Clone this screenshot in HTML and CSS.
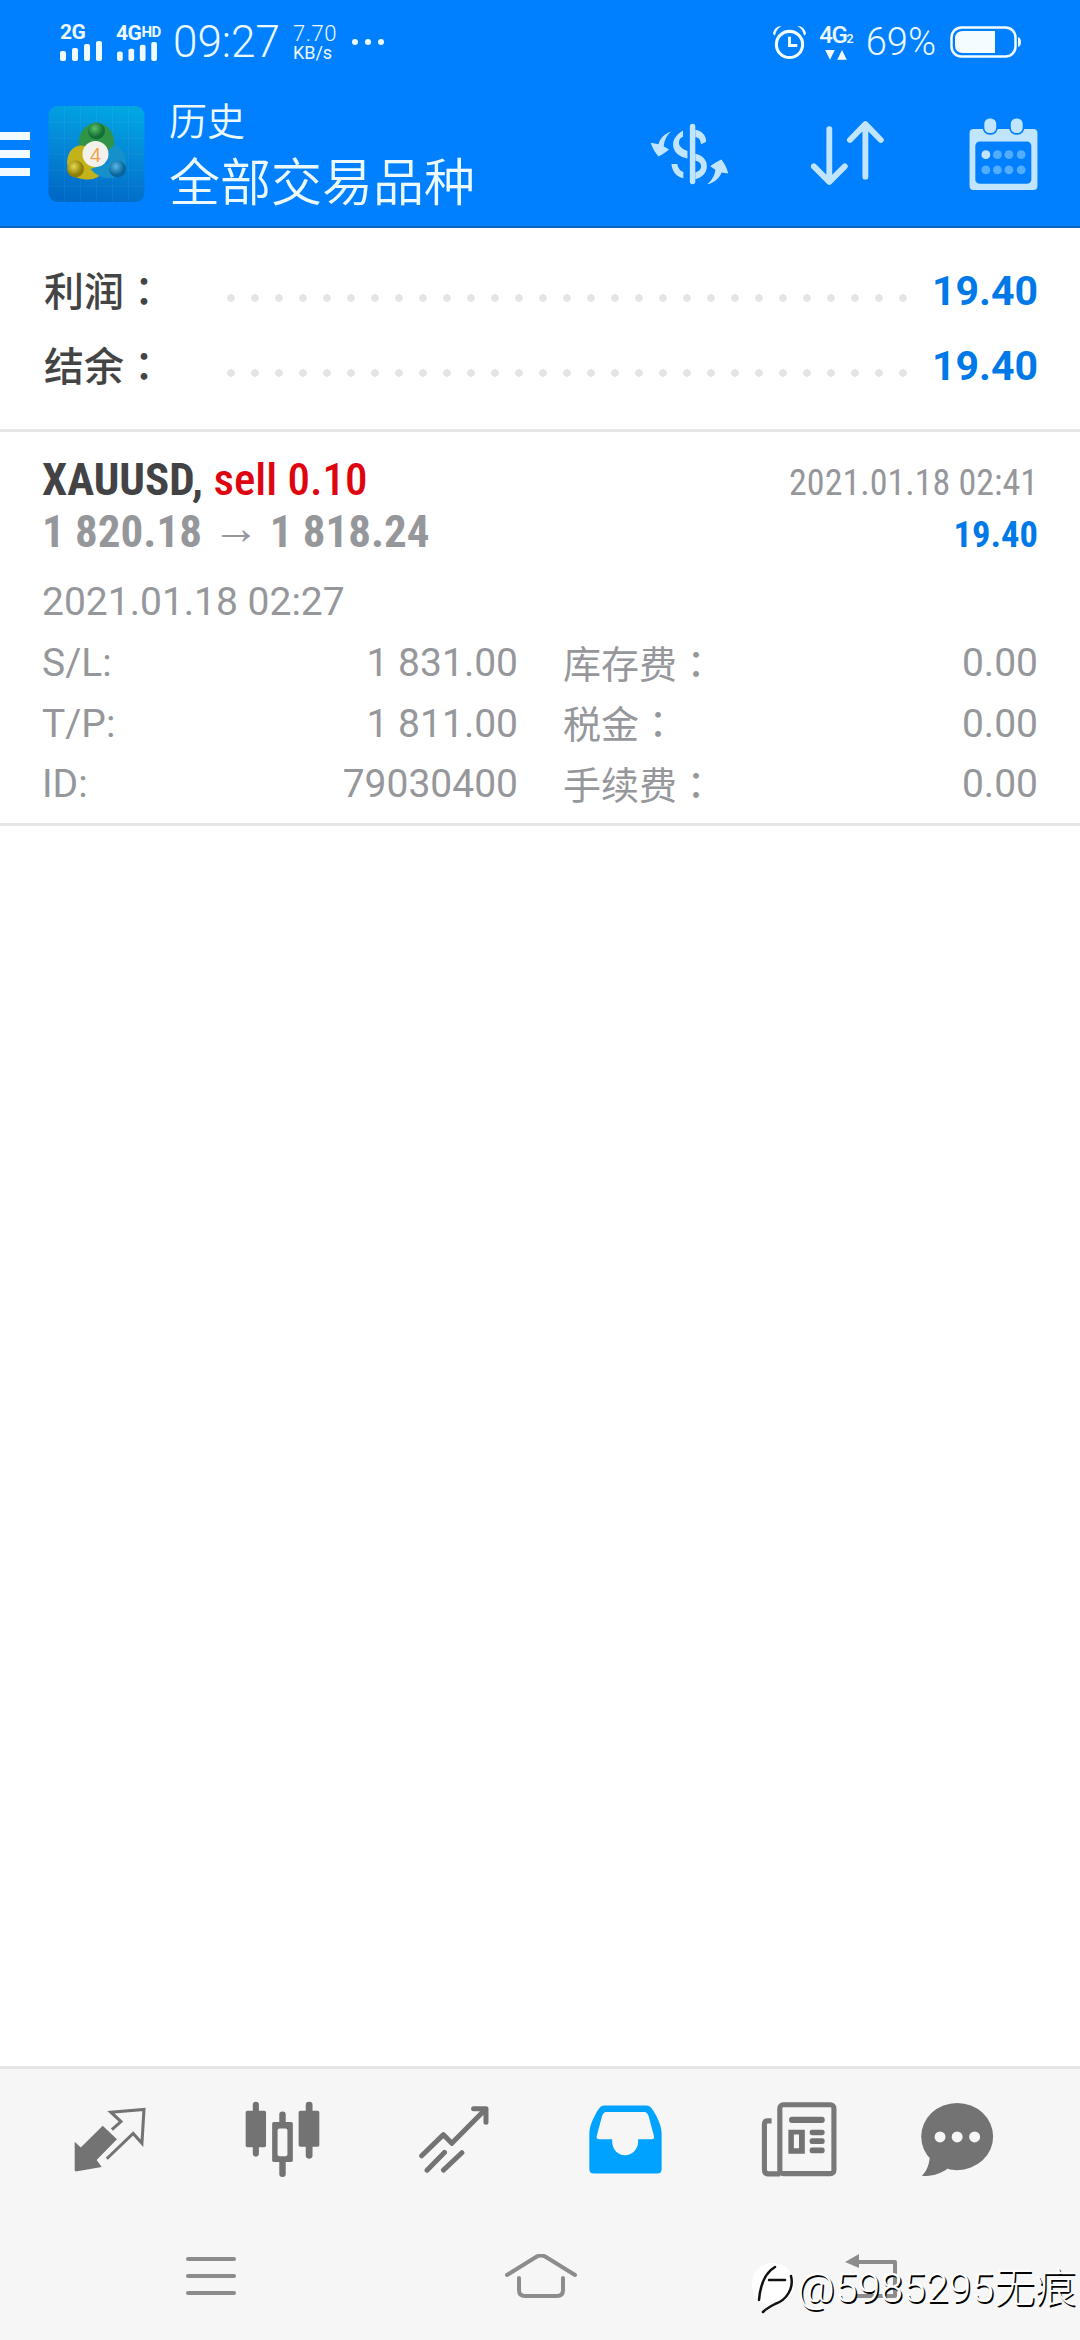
FILE: index.html
```html
<!DOCTYPE html>
<html lang="zh-CN">
<head>
<meta charset="utf-8">
<title>历史</title>
<link rel="stylesheet" href="styles.css">
</head>
<body>
<div class="app">
  <header class="top">
    <div class="status">
      <div class="sig">
        <span class="sig-label">2G</span>
        <svg class="sig-bars" viewBox="0 0 42 20"><rect x="0" y="10" width="6" height="10" rx="2"/><rect x="12" y="7" width="6" height="13" rx="2"/><rect x="24" y="3" width="6" height="17" rx="2"/><rect x="36" y="0" width="6" height="20" rx="2"/></svg>
      </div>
      <div class="sig sig-2">
        <span class="sig-label">4G<span class="sig-hd">HD</span></span>
        <svg class="sig-bars" viewBox="0 0 42 20"><rect x="0" y="10" width="6" height="10" rx="2"/><rect x="12" y="7" width="6" height="13" rx="2"/><rect x="24" y="3" width="6" height="17" rx="2"/><rect x="36" y="0" width="6" height="20" rx="2"/></svg>
      </div>
      <span class="time">09:27</span>
      <div class="speed"><span class="speed-n">7.70</span><span class="speed-u">KB/s</span></div>
      <div class="more"><i></i><i></i><i></i></div>
      <div class="status-right">
        <svg class="alarm" viewBox="0 0 36 36"><circle cx="18" cy="20" r="13.5" class="ln" stroke-width="3.2"/><path d="M18 12V21H26" class="ln" stroke-width="3"/><path d="M1 9C2 4 5 1 10 1 6 3 4 6 3 11Z M35 9C34 4 31 1 26 1 30 3 32 6 33 11Z" class="fl"/></svg>
        <div class="net">
          <span class="net-t">4G<span class="net-s">2</span></span>
          <svg class="net-a" viewBox="0 0 20 9"><path d="M1 0H9L5 8Z M11 8H19L15 0Z" class="fl"/></svg>
        </div>
        <span class="pct">69%</span>
        <svg class="batt" viewBox="0 0 72 32"><rect x="1.5" y="1.5" width="64" height="29" rx="10" class="ln" stroke-width="2.5"/><path d="M13 5H45V27H13Q5 27 5 19V13Q5 5 13 5Z" class="fl"/><path d="M68 11Q71 12 71 16 71 20 68 21Z" class="fl"/></svg>
      </div>
    </div>
    <div class="bar">
      <div class="burger"><i></i><i></i><i></i></div>
      <svg class="logo" viewBox="0 0 96 96">
        <defs>
          <linearGradient id="lg" x1="0.6" y1="0" x2="0.4" y2="1"><stop offset="0" stop-color="#00a6e2"/><stop offset="0.5" stop-color="#0586d6"/><stop offset="1" stop-color="#0068c6"/></linearGradient>
          <radialGradient id="gb" cx="0.4" cy="0.35"><stop offset="0" stop-color="#5cc268"/><stop offset="1" stop-color="#126f36"/></radialGradient>
          <radialGradient id="yb" cx="0.4" cy="0.35"><stop offset="0" stop-color="#e6da4c"/><stop offset="1" stop-color="#8f7d08"/></radialGradient>
          <radialGradient id="bb" cx="0.4" cy="0.35"><stop offset="0" stop-color="#58b8e4"/><stop offset="1" stop-color="#07659c"/></radialGradient>
        </defs>
        <rect width="96" height="96" rx="9" fill="url(#lg)"/>
        <path d="M0 16H96M0 32H96M0 48H96M0 64H96M0 80H96M16 0V96M32 0V96M48 0V96M64 0V96M80 0V96" class="logo-grid"/>
        <path d="M31 42C28 28 37 17 48 17 59 17 68 28 65 42L48 50Z" fill="#2f9447"/>
        <path d="M50 50C42 38 28 36 22 45 15 56 19 71 34 73 44 75 52 71 56 65Z" fill="#c4b21a"/>
        <path d="M42 63C50 73 66 76 74 67 81 58 78 44 66 39L57 47 60 57Z" fill="#1690cb"/>
        <circle cx="48" cy="25" r="8.5" fill="url(#gb)"/>
        <circle cx="27" cy="63" r="8.5" fill="url(#yb)"/>
        <circle cx="69" cy="63" r="8.5" fill="url(#bb)"/>
        <circle cx="47" cy="48" r="13" fill="#f3f1ec"/>
        <text x="47" y="56" class="logo-4">4</text>
      </svg>
      <div class="titles">
        <div class="t1">历史</div>
        <div class="t2">全部交易品种</div>
      </div>
      <div class="actions">
        <svg class="act act-1" viewBox="320 370 232 182">
          <rect x="437" y="372" width="16" height="178" rx="8" class="ac"/>
          <path class="ac" d="M453 390C470 392 485 405 485 425L470 432C468 418 462 412 453 412Z M417 392C395 405 380 425 392 450 398 462 410 470 430 474V452C418 448 405 440 405 428 405 418 410 412 417 410Z M453 460C475 465 487 478 487 497 487 518 472 530 453 535V515C465 512 470 505 470 497 470 488 465 483 453 480Z M383 490H400C402 502 408 510 418 514V532C398 528 385 512 383 490Z M382 395C362 402 350 415 345 432L322 428C328 445 335 458 345 468 358 462 368 455 376 448L360 438C362 420 370 405 382 395Z M488 550C510 545 525 530 530 515L550 518C545 500 538 488 530 477 518 482 505 490 497 497L512 507C510 525 500 540 488 550Z"/>
        </svg>
        <svg class="act act-2" viewBox="780 370 215 195">
          <path class="ac-ln" d="M836 397V550M791 505L836 550 881 505M941 535V382M896 428L941 382 986 428"/>
        </svg>
        <svg class="act act-3" viewBox="1240 355 206 218">
          <rect x="1243" y="390" width="200" height="180" rx="12" class="ac"/>
          <rect x="1260" y="427" width="165" height="125" rx="13" class="ac-bg"/>
          <rect x="1284" y="357" width="40" height="48" rx="18" class="ac ac-hook"/>
          <rect x="1362" y="357" width="40" height="48" rx="18" class="ac ac-hook"/>
          <circle cx="1291" cy="466" r="13" class="ac"/>
          <circle cx="1325" cy="466" r="13" class="ac-d"/><circle cx="1359" cy="466" r="13" class="ac-d"/><circle cx="1395" cy="466" r="13" class="ac-d"/>
          <circle cx="1291" cy="511" r="13" class="ac-d"/><circle cx="1325" cy="511" r="13" class="ac-d"/><circle cx="1359" cy="511" r="13" class="ac-d"/><circle cx="1395" cy="511" r="13" class="ac-d"/>
        </svg>
      </div>
    </div>
  </header>

  <section class="summary">
    <div class="sum-row">
      <span class="sum-label">利润<span class="colon" lang="zh-TW">：</span></span>
      <span class="dots"></span>
      <span class="sum-val">19.40</span>
    </div>
    <div class="sum-row">
      <span class="sum-label">结余<span class="colon" lang="zh-TW">：</span></span>
      <span class="dots"></span>
      <span class="sum-val">19.40</span>
    </div>
  </section>

  <section class="trade">
    <div class="trade-head">
      <div class="trade-l">
        <div class="sym">XAUUSD, <span class="sell">sell 0.10</span></div>
        <div class="prices">1 820.18 <span class="arrow">→</span> 1 818.24</div>
      </div>
      <div class="trade-r">
        <div class="close-t">2021.01.18 02:41</div>
        <div class="profit">19.40</div>
      </div>
    </div>
    <div class="open-t">2021.01.18 02:27</div>
    <div class="grid">
      <span>S/L:</span><span class="num">1 831.00</span><span class="k">库存费<span class="colon" lang="zh-TW">：</span></span><span class="num">0.00</span>
      <span>T/P:</span><span class="num">1 811.00</span><span class="k">税金<span class="colon" lang="zh-TW">：</span></span><span class="num">0.00</span>
      <span>ID:</span><span class="num">79030400</span><span class="k">手续费<span class="colon" lang="zh-TW">：</span></span><span class="num">0.00</span>
    </div>
  </section>

  <main class="blank"></main>

  <footer class="bottom">
    <nav class="tabs">
      <svg class="tab tab-1" viewBox="213 175 213 192">
        <path class="ti" d="M215 278L233 295 298 230 340 270 280 332 295 352 218 366 215 362Z"/>
        <path class="ti-ln" d="M310 328L388 253 414 282 420 182 322 190 352 218 325 242"/>
      </svg>
      <svg class="tab tab-2" viewBox="707 157 221 225">
        <rect x="730" y="158" width="18" height="162" rx="9" class="ti"/><rect x="709" y="185" width="60" height="107" rx="5" class="ti"/>
        <rect x="808" y="187" width="19" height="193" rx="9" class="ti"/><rect x="787" y="218" width="61" height="118" rx="5" class="ti"/><rect x="803" y="237" width="29" height="82" rx="6" class="ti-bg"/>
        <rect x="886" y="158" width="20" height="168" rx="9" class="ti"/><rect x="865" y="185" width="61" height="106" rx="5" class="ti"/>
      </svg>
      <svg class="tab tab-3" viewBox="1212 165 212 203">
        <path class="ti-rd" d="M1220 315L1285 252 1310 278 1412 175M1375 175H1412V215M1236 358L1288 305M1285 358L1340 306"/>
      </svg>
      <svg class="tab tab-4" viewBox="146 167 211 199">
        <path class="ti-on" fill-rule="evenodd" d="M190 168H312C322 168 330 178 336 190 348 212 356 230 356 250V352Q356 365 343 365H160Q147 365 147 352V250C147 230 155 212 167 190 173 178 180 168 190 168ZM196 187C190 187 186 192 184 198L168 258Q167 266 175 266H213V272C213 295 230 312 250 312 270 312 288 295 288 272V266H327Q335 266 334 258L318 198C316 192 312 187 306 187Z"/>
      </svg>
      <svg class="tab tab-5" viewBox="645 157 220 219">
        <rect x="699" y="165" width="158" height="201" rx="10" class="ti-st"/>
        <path class="ti-st" d="M675 212H664Q654 212 654 222V355Q654 367 666 367H700"/>
        <rect x="726" y="200" width="104" height="18" rx="8" class="ti"/>
        <path class="ti" fill-rule="evenodd" d="M724 238H772V308H724ZM740 252V292H755V252Z"/>
        <rect x="786" y="238" width="44" height="16" rx="7" class="ti"/><rect x="786" y="263" width="44" height="17" rx="7" class="ti"/><rect x="786" y="290" width="44" height="17" rx="7" class="ti"/>
      </svg>
      <svg class="tab tab-6" viewBox="1108 157 212 219">
        <ellipse cx="1213" cy="258" rx="105" ry="98" class="ti"/>
        <path class="ti" d="M1133 320C1130 345 1122 362 1110 372 1140 376 1165 365 1185 352Z"/>
        <circle cx="1163" cy="259" r="16" class="ti-bg"/><circle cx="1213" cy="259" r="16" class="ti-bg"/><circle cx="1264" cy="259" r="16" class="ti-bg"/>
      </svg>
    </nav>
    <nav class="sysnav">
      <div class="nav-menu"><i></i><i></i><i></i></div>
      <svg class="nav-home" viewBox="0 0 72 44"><path class="nv" d="M2 21L31 3Q36 0 41 3L70 21M14 24V36Q14 42 20 42H52Q58 42 58 36V24"/></svg>
      <svg class="nav-back" viewBox="0 0 56 44"><path class="nv" d="M10 8H50V42H10"/><path class="nv-f" d="M14 0V14L0 8Z"/></svg>
    </nav>
    <div class="mark">
      <svg class="mark-i" viewBox="0 0 44 52"><path class="mark-w" d="M22 1C34 1 43 10 43 22 43 32 36 40 26 42L14 50 15 42C6 38 1 31 1 22 1 10 10 1 22 1Z"/><path class="mark-k" d="M8 38C9 26 12 12 24 5M18 18H34M40 14C43 26 36 38 24 42 20 44 16 46 12 50"/></svg>
      <span class="mark-t">@5985295无痕</span>
    </div>
  </footer>
</div>
</body>
</html>
```
FILE: styles.css
```css
* { box-sizing: border-box; }
html, body { margin: 0; padding: 0; background: #fff; }
body { font-family: Roboto, "Noto Sans CJK SC", sans-serif; }
i { display: block; }

.app { width: 1080px; height: 2340px; display: flex; flex-direction: column; position: relative; overflow: hidden; }

/* header */
.top { background: #0080ff; color: #ecfaff; border-bottom: 2px solid #0a66bb; height: 228px; flex: none; }
.status { height: 84px; display: flex; align-items: center; padding: 0 58px 0 60px; }
.sig { display: flex; flex-direction: column; width: 44px; height: 38px; justify-content: space-between; }
.sig-2 { margin-left: 12px; }
.sig-label { font: 700 21px/18px Roboto, sans-serif; white-space: nowrap; letter-spacing: -0.5px; }
.sig-hd { font-size: 15px; vertical-align: 3px; }
.sig-bars { width: 42px; height: 20px; display: block; fill: #f0fbff; }
.time { font: 300 44px/48px Roboto, sans-serif; margin-left: 13px; }
.speed { display: flex; flex-direction: column; margin-left: 13px; }
.speed-n { font: 300 22px/21px Roboto, sans-serif; letter-spacing: 0.6px; }
.speed-u { font: 400 18px/18px Roboto, sans-serif; }
.more { display: flex; gap: 7px; margin-left: 15px; }
.more i { width: 6px; height: 6px; border-radius: 50%; background: #ecfaff; }
.status-right { margin-left: auto; display: flex; align-items: center; }
.alarm { width: 35px; height: 35px; }
.ln { fill: none; stroke: #f4fcff; }
.fl { fill: #f4fcff; }
.net { display: flex; flex-direction: column; align-items: center; margin-left: 11px; width: 36px; }
.net-t { font: 500 24px/23px Roboto, sans-serif; white-space: nowrap; letter-spacing: -1.5px; }
.net-s { font-size: 13px; }
.net-a { width: 24px; height: 11px; }
.pct { font: 300 38px/44px Roboto, sans-serif; margin-left: 12px; }
.batt { width: 72px; height: 32px; margin-left: 14px; }

.bar { height: 142px; display: flex; align-items: center; padding-bottom: 3px; }
.burger { width: 30px; display: flex; flex-direction: column; gap: 10px; }
.burger i { height: 8px; background: #f0faff; }
.logo { width: 97px; height: 96px; margin-left: 18px; margin-top: 1px; flex: none; }
.logo-grid { stroke: rgba(255,255,255,0.05); stroke-width: 1; fill: none; }
.logo-4 { font: 500 20px "Liberation Sans", sans-serif; fill: #f2a24a; text-anchor: middle; }
.titles { margin-left: 24px; display: flex; flex-direction: column; margin-top: 1px; }
.t1 { font: 350 38px/50px "Noto Sans CJK SC", sans-serif; }
.t2 { font: 350 51px/70px "Noto Sans CJK SC", sans-serif; }
.actions { margin-left: auto; display: flex; align-items: center; padding-right: 41px; }
.act { display: block; flex: none; }
.act-1 { width: 79px; height: 62px; }
.act-2 { width: 74px; height: 67px; margin-left: 81px; }
.act-3 { width: 71px; height: 74px; margin-left: 84px; }
.ac { fill: #c2e5ff; }
.ac-bg { fill: #0080ff; }
.ac-d { fill: #52acff; }
.ac-ln { fill: none; stroke: #c2e5ff; stroke-width: 17; stroke-linecap: round; stroke-linejoin: round; }
.ac-hook { stroke: #0080ff; stroke-width: 5; }

/* summary */
.summary { padding: 26px 42px 26px 44px; border-bottom: 3px solid #e6e6e6; flex: none; }
.sum-row { display: flex; height: 74.5px; align-items: center; }
.sum-label { font: 500 40px/50px "Noto Sans CJK SC", sans-serif; color: #444; width: 183px; flex: none; margin-top: -4px; }
.colon { font-family: "Noto Sans CJK TC", sans-serif; }
.dots { flex: 1; height: 8px; margin-top: 14px; margin-right: 22px;
  background-image: radial-gradient(circle at 4px 4px, #e4e4e4 3.5px, transparent 4px);
  background-size: 24px 8px; background-repeat: repeat-x; }
.sum-val { font: 700 41px/50px Roboto, sans-serif; color: #0079e8; flex: none; }

/* trade */
.trade { padding: 22px 42px 8px 42px; border-bottom: 3px solid #e6e6e6; flex: none; color: #96979b; }
.trade-head { display: flex; justify-content: space-between; }
.sym { font: 700 45px/52px Roboto, sans-serif; font-stretch: 75%; color: #434345; white-space: pre; }
.sell { color: #df0510; font-weight: 500; }
.prices { font: 700 45px/52px Roboto, sans-serif; font-stretch: 75%; color: #96979b; }
.arrow { font: 700 47px/40px "Liberation Sans", sans-serif; vertical-align: 3px; }
.trade-r { text-align: right; padding-top: 3px; }
.close-t { font: 400 36px/52px Roboto, sans-serif; font-stretch: 75%; }
.profit { font: 700 36.5px/52px Roboto, sans-serif; font-stretch: 75%; color: #0079e8; }
.open-t { font: 400 39px/54px Roboto, sans-serif; margin-top: 14px; }
.grid { display: grid; grid-template-columns: 300px 176px 1fr auto; grid-auto-rows: 60.5px; align-items: center; font: 400 39px/50px Roboto, "Noto Sans CJK SC", sans-serif; margin-top: 4px; }
.num { text-align: right; }
.k { padding-left: 45px; font-size: 38px; }

.blank { flex: 1; background: #fff; }

/* bottom */
.bottom { background: #f6f6f6; border-top: 3px solid #e6e6e6; height: 274px; flex: none; position: relative; }
.tabs { display: flex; align-items: center; height: 141px; padding-left: 74px; column-gap: 99px; }
.tab { display: block; flex: none; }
.tab-1 { width: 72px; height: 65px; }
.tab-2 { width: 75px; height: 77px; }
.tab-3 { width: 71px; height: 69px; }
.tab-4 { width: 73px; height: 69px; }
.tab-5 { width: 76px; height: 75px; }
.tab-6 { width: 73px; height: 75px; margin-left: -15px; }
.ti { fill: #737373; }
.ti-bg { fill: #f6f6f6; }
.ti-on { fill: #00a2ff; }
.ti-ln { fill: none; stroke: #737373; stroke-width: 9; stroke-linejoin: miter; }
.ti-rd { fill: none; stroke: #737373; stroke-width: 15; stroke-linecap: round; stroke-linejoin: round; }
.ti-st { fill: none; stroke: #787878; stroke-width: 15; }
.sysnav { display: flex; align-items: center; height: 132px; padding-left: 186px; }
.nav-menu { width: 50px; display: flex; flex-direction: column; gap: 13px; flex: none; }
.nav-menu i { height: 4px; border-radius: 2px; background: #8c8c8c; }
.nav-home { width: 72px; height: 44px; margin-left: 269px; flex: none; }
.nav-back { width: 56px; height: 44px; margin-left: 268px; flex: none; }
.nv { fill: none; stroke: #8c8c8c; stroke-width: 4; stroke-linecap: round; stroke-linejoin: round; }
.nv-f { fill: #8c8c8c; }
.mark { position: absolute; right: 4px; bottom: 26px; display: flex; align-items: center; gap: 2px; }
.mark-i { width: 44px; height: 52px; }
.mark-w { fill: #fff; }
.mark-k { fill: none; stroke: #111; stroke-width: 2.5; stroke-linecap: round; }
.mark-t { font: 300 41px/52px Roboto, "Noto Sans CJK SC", sans-serif; color: #fff; text-shadow: 1.5px 1.5px 0 #000; white-space: nowrap; }
```
